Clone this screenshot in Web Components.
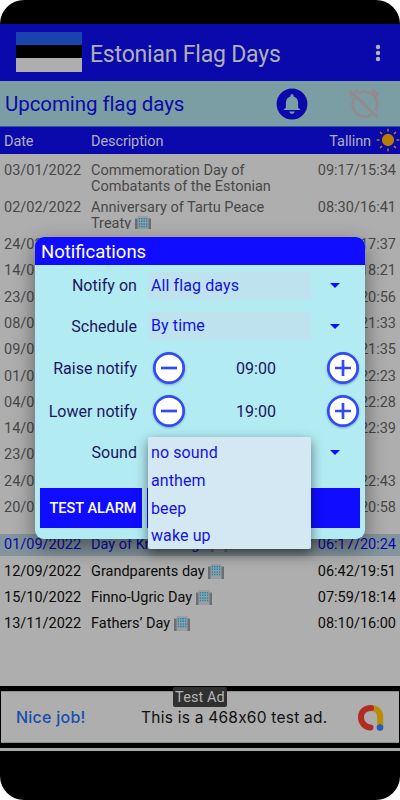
<!DOCTYPE html>
<html lang="en">
<head>
<meta charset="utf-8">
<title>Estonian Flag Days</title>
<style>
  html, body { margin: 0; background: #fff; }
  body { font-family: Roboto, "Noto Sans", sans-serif; }
</style>
</head>
<body>
<flag-app></flag-app>
<script>
const define = (name, css, html) => customElements.define(name, class extends HTMLElement {
  constructor() {
    super();
    this.attachShadow({ mode: "open" });
  }
  connectedCallback() {
    const body = typeof html === "function" ? html(this) : html;
    this.shadowRoot.innerHTML = `<style>${css}</style>${body}`;
  }
});

define("app-bar", `
  :host { display: flex; align-items: center; box-sizing: border-box; height: 57px; padding: 0 19px 0 16px; background: #0a09ac; color: #b0b0b4; }
  .flag { width: 66px; height: 40px; margin-bottom: 1px; background: linear-gradient(#1a43ad 0 13.5px, #000 13.5px 26.5px, #aeaeae 26.5px); }
  h1 { flex: 1; margin: 0 0 0 8px; padding-top: 3px; font-size: 23px; font-weight: 400; letter-spacing: -.2px; }
  svg { display: block; margin-top: 1px; }
`, `
  <div class="flag"></div>
  <h1><slot></slot></h1>
  <svg width="6" height="18" fill="#b4b4b8"><circle cx="3" cy="3" r="2.2"/><circle cx="3" cy="9" r="2.2"/><circle cx="3" cy="15" r="2.2"/></svg>
`);

define("sub-bar", `
  :host { display: flex; align-items: center; box-sizing: border-box; height: 46px; padding: 0 20.5px 0 5px; background: #7a9ea3; border-bottom: 1px solid #3c56a6; color: #0a09ac; }
  h2 { flex: 1; margin: 0; padding-top: 1px; font-size: 20.5px; font-weight: 400; letter-spacing: -.08px; }
  svg { display: block; }
  .bell { margin-right: 40.5px; }
`, `
  <h2><slot></slot></h2>
  <svg class="bell" width="32" height="32" viewBox="0 0 32 32">
    <circle cx="16" cy="16" r="15.4" fill="#0a09ac"/>
    <path fill="#7a9ea3" d="M16 6.2c1 0 1.6.7 1.6 1.6v.6c3 .8 4.5 3.3 4.5 6.4v4.9l2 1.6v.8H7.9v-.8l2-1.6v-4.9c0-3.1 1.5-5.6 4.5-6.4v-.6c0-.9.6-1.6 1.6-1.6zM13.3 23.5h5.4c-.4 1.5-1.4 2.3-2.7 2.3s-2.3-.8-2.7-2.3z"/>
  </svg>
  <svg width="31" height="31" viewBox="0 0 31 31" fill="none" stroke="#95898f" stroke-width="2.8">
    <path d="M9.5 5.8A12.1 12.1 0 0 1 26.3 22.6M22.5 26.6A12.1 12.1 0 0 1 5.7 9.8"/>
    <path d="M1 2.8L28.5 29.5M22.5 1.2L29.5 7.2M1 8.2L4.3 5.2M6 4L8.6 1.6"/>
  </svg>
`);

define("table-head", `
  :host { display: grid; grid-template-columns: 87px 1fr auto auto; align-items: center; box-sizing: border-box; height: 27px; padding: 1px 0 0 4px; background: #0a09ac; color: #b0b0c0; font-size: 14.5px; letter-spacing: -.1px; }
  svg { display: block; margin-left: 5px; margin-top: -2px; }
`, `
  <span>Date</span><span>Description</span><span>Tallinn</span>
  <svg width="24" height="24" viewBox="-12 -12 24 24" fill="#b87d00" stroke="#b87d00" stroke-width="1.5">
    <circle r="5.4"/>
    <path d="M0-8.5v-2.8M0 8.5v2.8M-8.5 0h-2.8M8.5 0h2.8M-6-6l-2-2M6 6l2 2M-6 6l-2 2M6-6l2-2"/>
  </svg>
`);

define("building-icon", `
  :host { display: inline-block; width: 16px; height: 15px; vertical-align: -3px; }
  svg { display: block; }
`, `
  <svg width="16" height="15" viewBox="0 0 16 15">
    <path fill="#6b6f73" d="M0 2.5h3V15H0zM13 2.5h3V15h-3z"/>
    <path fill="#9a9fa2" d="M2.5 0h11v15h-11z"/>
    <g stroke="#1687b3" stroke-width="1.4" stroke-dasharray="1.5 1.1">
      <path d="M4.4 2v10.5M6.8 2v10.5M9.2 2v10.5M11.6 2v10.5"/>
    </g>
  </svg>
`);

define("flag-day", `
  :host { display: grid; grid-template-columns: 87px 189px 1fr; box-sizing: border-box; height: 22px; margin-bottom: 4.3px; padding: 3.5px 4px 0 4px; overflow: hidden; color: #484848; font-size: 14.5px; line-height: 16.5px; }
  :host([tall]) { height: 33px; }
  :host([next]) { background: #84949c; color: #0a09ac; }
  :host([soon]) { color: #0b0b0b; }
  .time { text-align: right; }
`, el => `
  <span>${el.getAttribute("date")}</span>
  <span><slot></slot>${el.hasAttribute("off") ? " <building-icon></building-icon>" : ""}</span>
  <span class="time">${el.getAttribute("time") || ""}</span>
`);

define("ad-banner", `
  :host { display: block; position: relative; box-sizing: border-box; height: 65px; padding-top: 5px; background: #000; }
  .ad { display: flex; align-items: center; box-sizing: border-box; height: 52px; margin: 0 1px; border: solid #879194; border-width: 1px 0; padding: 0 15px 0 15px; background: #aeaeae; color: #101010; font-family: Inter, sans-serif; font-feature-settings: "calt" 0; font-size: 15.5px; letter-spacing: .24px; }
  b { width: 125px; color: #1750ac; font-weight: 500; font-size: 16px; }
  span { flex: 1; white-space: nowrap; }
  .line { height: 3px; margin-top: 5px; background: #a8abaa; }
  .tag { position: absolute; left: 173px; top: 1px; width: 54px; height: 20px; border-radius: 2px; background: #303030; color: #b4b4b4; font-size: 14.5px; line-height: 21px; text-align: center; letter-spacing: .1px; }
`, `
  <div class="ad">
    <b>Nice job!</b><span>This is a 468x60 test ad.</span>
    <svg width="27" height="27" viewBox="0 0 27 27" fill="none" stroke-width="6" stroke-linecap="round">
      <path stroke="#bd8c06" d="M14 4C20 4 23.2 8 23.2 13V22"/>
      <path stroke="#b12c22" d="M14 4C7 4 4 8.5 4 13.5S8 23.5 13.5 23.5"/>
      <circle cx="23" cy="23.5" r="3.3" fill="#245cb8"/>
    </svg>
  </div>
  <div class="line"></div>
  <div class="tag">Test Ad</div>
`);

define("form-row", `
  :host { display: grid; grid-template-columns: 102px 1fr; column-gap: 11px; align-items: center; height: 40.5px; color: #1c1560; font-size: 16px; letter-spacing: .04px; }
  :host([big]) { height: 43px; }
  label { text-align: right; }
`, el => `<label>${el.getAttribute("label")}</label><slot></slot>`);

define("select-box", `
  :host { display: grid; grid-template-columns: 163px 48px; align-items: center; letter-spacing: .1px; }
  div { height: 28px; box-sizing: border-box; padding-left: 3px; background: #bee3ef; color: #1512e0; line-height: 28px; }
  :host([open]) div { background: none; }
  svg { justify-self: center; }
`, `<div><slot></slot></div><svg width="10" height="5"><path fill="#0f0cff" d="M0 0h10L5 5z"/></svg>`);

define("time-stepper", `
  :host { display: grid; grid-template-columns: 42px 132px 41px; align-items: center; text-align: center; }
  svg { display: block; justify-self: center; overflow: visible; filter: drop-shadow(0 1px 1px rgba(0, 0, 60, .3)); }
`, () => {
  const button = sign => `<svg width="32" height="32" viewBox="0 0 32 32" stroke="#2f4bf5" stroke-width="2.7" fill="none"><circle cx="16" cy="16" r="14.7" fill="#fff"/><path d="${sign}"/></svg>`;
  return `${button("M8 16h16")}<span><slot></slot></span>${button("M8 16h16M16 8v16")}`;
});

define("sound-menu", `
  :host { position: absolute; left: 113px; top: 200.5px; box-sizing: border-box; width: 163px; height: 111.5px; padding-top: 2px; border-radius: 2px; background: #d3e8f3; box-shadow: 0 4px 12px rgba(0, 0, 0, .5); color: #1512e0; font-size: 16px; letter-spacing: .1px; }
  div { height: 27.8px; padding-left: 3px; line-height: 27px; }
`, `<div>no sound</div><div>anthem</div><div>beep</div><div>wake up</div>`);

define("notify-dialog", `
  :host { position: absolute; left: 35px; top: 236.5px; box-sizing: border-box; width: 330px; height: 302px; border-radius: 9px; background: #b2ebf2; box-shadow: 0 8px 22px rgba(0, 0, 0, .45); }
  h3 { margin: 0 0 .5px; height: 28.5px; padding-left: 6px; border-radius: 9px 9px 0 0; background: #0f0cff; color: #fff; font-size: 18.5px; font-weight: 400; line-height: 31px; }
  .buttons { display: grid; grid-template-columns: 102px 1fr; gap: 5px; padding: 14.5px 5px 0; }
  button { height: 40px; margin: 0; padding: 1px 0 0 4px; border: 0; background: #0f0cff; color: #fff; font: 500 14.5px Roboto, sans-serif; white-space: nowrap; }
`, `
  <h3>Notifications</h3>
  <form-row label="Notify on"><select-box>All flag days</select-box></form-row>
  <form-row label="Schedule"><select-box>By time</select-box></form-row>
  <form-row label="Raise notify" big><time-stepper>09:00</time-stepper></form-row>
  <form-row label="Lower notify" big><time-stepper>19:00</time-stepper></form-row>
  <form-row label="Sound"><select-box open></select-box></form-row>
  <div class="buttons"><button>TEST ALARM</button><button></button></div>
  <sound-menu></sound-menu>
`);

define("flag-app", `
  :host { display: flex; flex-direction: column; position: relative; box-sizing: border-box; width: 400px; height: 800px; padding-top: 24px; border-radius: 24px; overflow: hidden; background: #000; }
  main { box-sizing: border-box; height: 532px; padding-top: 5px; background: #aeaeae; overflow: hidden; }
`, `
  <app-bar>Estonian Flag Days</app-bar>
  <sub-bar>Upcoming flag days</sub-bar>
  <table-head></table-head>
  <main>
    <flag-day tall date="03/01/2022" time="09:17/15:34">Commemoration Day of Combatants of the Estonian</flag-day>
    <flag-day tall date="02/02/2022" time="08:30/16:41" off>Anniversary of Tartu Peace Treaty</flag-day>
    <flag-day date="24/02/2022" time="07:28/17:37"></flag-day>
    <flag-day date="14/03/2022" time="06:38/18:21"></flag-day>
    <flag-day date="23/04/2022" time="05:41/20:56"></flag-day>
    <flag-day date="08/05/2022" time="05:02/21:33"></flag-day>
    <flag-day date="09/05/2022" time="05:00/21:35"></flag-day>
    <flag-day date="01/06/2022" time="04:15/22:23"></flag-day>
    <flag-day date="04/06/2022" time="04:11/22:28"></flag-day>
    <flag-day date="14/06/2022" time="04:03/22:39"></flag-day>
    <flag-day date="23/06/2022"></flag-day>
    <flag-day date="24/06/2022" time="04:04/22:43"></flag-day>
    <flag-day tall date="20/08/2022" time="05:50/20:58"></flag-day>
    <flag-day next date="01/09/2022" time="06:17/20:24" off>Day of Knowledge</flag-day>
    <flag-day soon date="12/09/2022" time="06:42/19:51" off>Grandparents day</flag-day>
    <flag-day soon date="15/10/2022" time="07:59/18:14" off>Finno-Ugric Day</flag-day>
    <flag-day soon date="13/11/2022" time="08:10/16:00" off>Fathers’ Day</flag-day>
  </main>
  <ad-banner></ad-banner>
  <notify-dialog></notify-dialog>
`);
</script>
</body>
</html>
